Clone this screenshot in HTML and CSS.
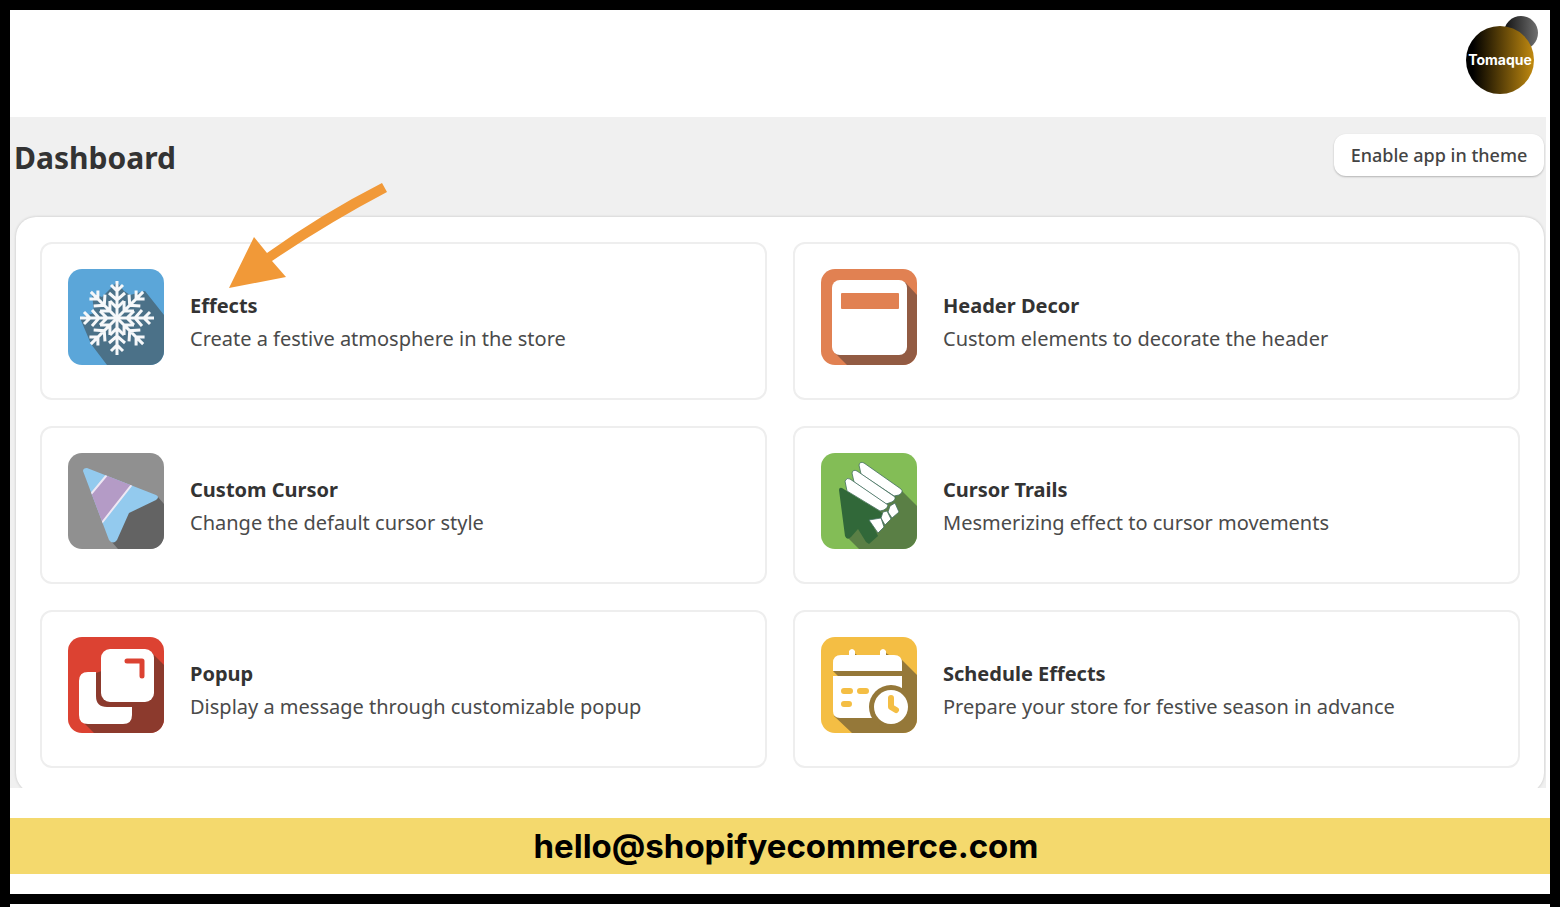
FILE: index.html
```html
<!DOCTYPE html>
<html lang="en">
<head>
    <meta charset="UTF-8">
    <meta name="viewport" content="width=device-width, initial-scale=1.0">
    <title>Dashboard</title>
    <link rel="stylesheet" href="styles.css">
</head>
<body>
    <div class="frame">
        <header class="topbar">
            <svg class="logo" viewBox="0 0 72 78" role="img" aria-label="Tomaque">
                <defs>
                    <linearGradient id="gold"><stop offset="0.1" stop-color="#000"/><stop offset="1" stop-color="#c18a10"/></linearGradient>
                    <linearGradient id="grey"><stop offset="0" stop-color="#111"/><stop offset="1" stop-color="#707070"/></linearGradient>
                </defs>
                <circle cx="55" cy="17" r="17" fill="url(#grey)"/>
                <circle cx="34" cy="44" r="34" fill="url(#gold)"/>
                <text class="logo-text" x="34" y="49" text-anchor="middle">Tomaque</text>
            </svg>
        </header>

        <main class="dashboard">
            <div class="title-row">
                <h1>Dashboard</h1>
                <button type="button" class="button">Enable app in theme</button>
            </div>

            <div class="panel">
                <a href="#" class="card">
                    <svg class="icon" viewBox="0 0 96 96">
                        <defs>
                            <clipPath id="tile"><rect width="96" height="96" rx="14"/></clipPath>
                            <path id="arm" d="M0 0V-37M-6 -33L0 -27L6 -33M-8 -25L0 -18L8 -25M-7 -17L0 -10L7 -17"/>
                        </defs>
                        <g clip-path="url(#tile)">
                            <rect width="96" height="96" fill="#5ba6d9"/>
                            <path d="M12 49L26 44L24 24L34 28L49 13L56 22L62 26L77 22L96 46V96H39L23 75Z" fill="#4b7188"/>
                        </g>
                        <g transform="translate(49 49)" fill="none" stroke="#f6f8fa" stroke-width="3">
                            <use href="#arm"/>
                            <use href="#arm" transform="rotate(45)"/>
                            <use href="#arm" transform="rotate(90)"/>
                            <use href="#arm" transform="rotate(135)"/>
                            <use href="#arm" transform="rotate(180)"/>
                            <use href="#arm" transform="rotate(225)"/>
                            <use href="#arm" transform="rotate(270)"/>
                            <use href="#arm" transform="rotate(315)"/>
                        </g>
                    </svg>
                    <div class="card-text">
                        <h2>Effects</h2>
                        <p>Create a festive atmosphere in the store</p>
                    </div>
                </a>

                <a href="#" class="card">
                    <svg class="icon" viewBox="0 0 96 96">
                        <g clip-path="url(#tile)">
                            <rect width="96" height="96" fill="#e18152"/>
                            <path d="M84 13L96 26V96H26L14 84Z" fill="#925b43"/>
                        </g>
                        <rect x="11" y="11" width="75" height="75" rx="8" fill="#fff"/>
                        <rect x="20" y="24" width="58" height="16" rx="1" fill="#e18152"/>
                    </svg>
                    <div class="card-text">
                        <h2>Header Decor</h2>
                        <p>Custom elements to decorate the header</p>
                    </div>
                </a>

                <a href="#" class="card">
                    <svg class="icon" viewBox="0 0 96 96">
                        <defs>
                            <clipPath id="cursor"><path d="M15 18Q15 15 19 15L88 42Q92 44 88 47L61 60L49 87Q45 92 41 87Z"/></clipPath>
                        </defs>
                        <g clip-path="url(#tile)">
                            <rect width="96" height="96" fill="#909090"/>
                            <path d="M90 44L96 51V96H50L43 88L60 58Z" fill="#636363"/>
                        </g>
                        <g clip-path="url(#cursor)">
                            <rect width="96" height="96" fill="#93caee"/>
                            <path d="M43 17L18 47L29 76L69 25Z" fill="#b49bc6" stroke="#eee8f4" stroke-width="2"/>
                        </g>
                    </svg>
                    <div class="card-text">
                        <h2>Custom Cursor</h2>
                        <p>Change the default cursor style</p>
                    </div>
                </a>

                <a href="#" class="card">
                    <svg class="icon" viewBox="0 0 96 96">
                        <g clip-path="url(#tile)">
                            <rect width="96" height="96" fill="#83bd56"/>
                            <path d="M80 37L96 53V96H38L26 84L50 40Z" fill="#5a7f45"/>
                        </g>
                        <path d="M18 37Q18 34 21 35L61 60V65L49 67L57 83L48 91L45 89L37 76L30 84Q26 88 24 83Z" fill="#316839"/>
                        <g fill="#fff" stroke="#426f60" stroke-width="0.8">
                            <path d="M38 12Q39 8 43 10L80 36Q83 39 78 42L73 43L40 21Z"/>
                            <path d="M31 20Q32 16 36 18L74 44Q75 48 68 50L65 51L33 29Z"/>
                            <path d="M24 28Q26 24 29 26L67 52Q66 57 59 58L26 38Z"/>
                            <path d="M69 53L74 50L78 59L71 65L67 59Z"/>
                            <path d="M62 59L66 58L70 66L64 72L60 65Z"/>
                            <path d="M48 67L60 65L63 74L57 80Z"/>
                        </g>
                    </svg>
                    <div class="card-text">
                        <h2>Cursor Trails</h2>
                        <p>Mesmerizing effect to cursor movements</p>
                    </div>
                </a>

                <a href="#" class="card">
                    <svg class="icon" viewBox="0 0 96 96">
                        <g clip-path="url(#tile)">
                            <rect width="96" height="96" fill="#dc4232"/>
                            <path d="M84 16L96 28V96H26L14 84L28 36Z" fill="#8c3a2d"/>
                        </g>
                        <path d="M20 35H28V59Q28 70 39 70H64V78Q64 87 55 87H20Q11 87 11 78V44Q11 35 20 35Z" fill="#fff"/>
                        <rect x="33" y="12" width="53" height="53" rx="9" fill="#fff"/>
                        <path d="M59 24H74V39" fill="none" stroke="#dc4232" stroke-width="5" stroke-linecap="round" stroke-linejoin="round"/>
                    </svg>
                    <div class="card-text">
                        <h2>Popup</h2>
                        <p>Display a message through customizable popup</p>
                    </div>
                </a>

                <a href="#" class="card">
                    <svg class="icon" viewBox="0 0 96 96">
                        <g clip-path="url(#tile)">
                            <rect width="96" height="96" fill="#f4be44"/>
                            <path d="M12 34H30V14L36 18H62V14L68 18L80 22L96 38V96H31L13 79L40 50L17 39Z" fill="#957839"/>
                        </g>
                        <path d="M12 34V26Q12 18 20 18H28V14Q31 10 34 14V18H59V14Q62 10 65 14V18H73Q81 18 81 26V34Z" fill="#fff"/>
                        <path d="M12 39H81V81H19Q12 81 12 74Z" fill="#fff"/>
                        <circle cx="70" cy="70" r="22" fill="#957839"/>
                        <circle cx="70" cy="70" r="17" fill="#fff"/>
                        <path d="M23 54H29M39 54H45M23 67H28M70 61V70L75 73" fill="none" stroke="#f4be44" stroke-width="6" stroke-linecap="round" stroke-linejoin="round"/>
                    </svg>
                    <div class="card-text">
                        <h2>Schedule Effects</h2>
                        <p>Prepare your store for festive season in advance</p>
                    </div>
                </a>
            </div>

            <!-- Arrow pointing at the Effects card -->
            <svg class="arrow" viewBox="0 0 158 106" aria-hidden="true">
                <path d="M0 105L25 54L38 70Q94 30 153 0L158 9Q99 40 43 78L57 94Z" fill="#f19938"/>
            </svg>
        </main>

        <footer class="contact">
            <a href="mailto:hello@shopifyecommerce.com">hello@shopifyecommerce.com</a>
        </footer>
    </div>
</body>
</html>
```
FILE: styles.css
```css
* {
    box-sizing: border-box;
}
body {
    margin: 0;
    min-height: 100vh;
    border-left: 10px solid #000;
    border-right: 10px solid #000;
    background-color: #fff;
    font-family: "Noto Sans", "Open Sans", sans-serif;
    color: #333;
}
h1, h2, p {
    margin: 0;
}
.frame {
    border-top: 10px solid #000;
    border-bottom: 10px solid #000;
    padding-bottom: 20px;
}
.topbar {
    display: flex;
    justify-content: flex-end;
    height: 107px;
    padding: 6px 12px;
}
.logo {
    width: 72px;
    height: 78px;
}
.logo-text {
    font-family: Inter, sans-serif;
    font-size: 14px;
    font-weight: 700;
    fill: #fff;
}
.dashboard {
    position: relative;
    height: 671px;
    margin-right: 4px;
    background-color: #f0f0f0;
    overflow: hidden;
}
.title-row {
    display: flex;
    justify-content: space-between;
    align-items: flex-start;
    height: 100px;
    padding: 17px 2px 0 4px;
}
h1 {
    font-size: 30px;
    line-height: 48px;
    font-weight: 700;
}
.button {
    width: 210px;
    height: 42px;
    padding: 0;
    border: 0;
    border-radius: 12px;
    background-color: #fff;
    box-shadow: 0 1px 2px rgba(0,0,0,0.25);
    font-family: inherit;
    font-size: 18px;
    font-weight: 500;
    color: #444;
    cursor: pointer;
}
.panel {
    display: grid;
    grid-template-columns: 1fr 1fr;
    gap: 26px;
    margin: 0 2px 0 6px;
    padding: 25px 24px;
    border-radius: 20px;
    background-color: #fff;
    box-shadow: 0 0 3px rgba(0,0,0,0.2);
}
.card {
    display: flex;
    align-items: flex-start;
    gap: 26px;
    height: 158px;
    padding: 25px 26px;
    border: 2px solid #eee;
    border-radius: 12px;
    color: inherit;
    text-decoration: none;
}
.icon {
    flex: none;
    width: 96px;
    height: 96px;
}
.card-text {
    padding-top: 21px;
}
h2 {
    font-size: 20px;
    line-height: 32px;
    font-weight: 700;
}
p {
    font-size: 20px;
    line-height: 34px;
    color: #4a4a4a;
}
.arrow {
    position: absolute;
    left: 219px;
    top: 66px;
    width: 158px;
    height: 106px;
}
.contact {
    display: flex;
    justify-content: center;
    align-items: center;
    height: 56px;
    margin-top: 30px;
    padding-left: 12px;
    background-color: #f4d96d;
}
.contact a {
    font-family: Inter, sans-serif;
    font-size: 33px;
    font-weight: 700;
    color: #000;
    text-decoration: none;
}
```
